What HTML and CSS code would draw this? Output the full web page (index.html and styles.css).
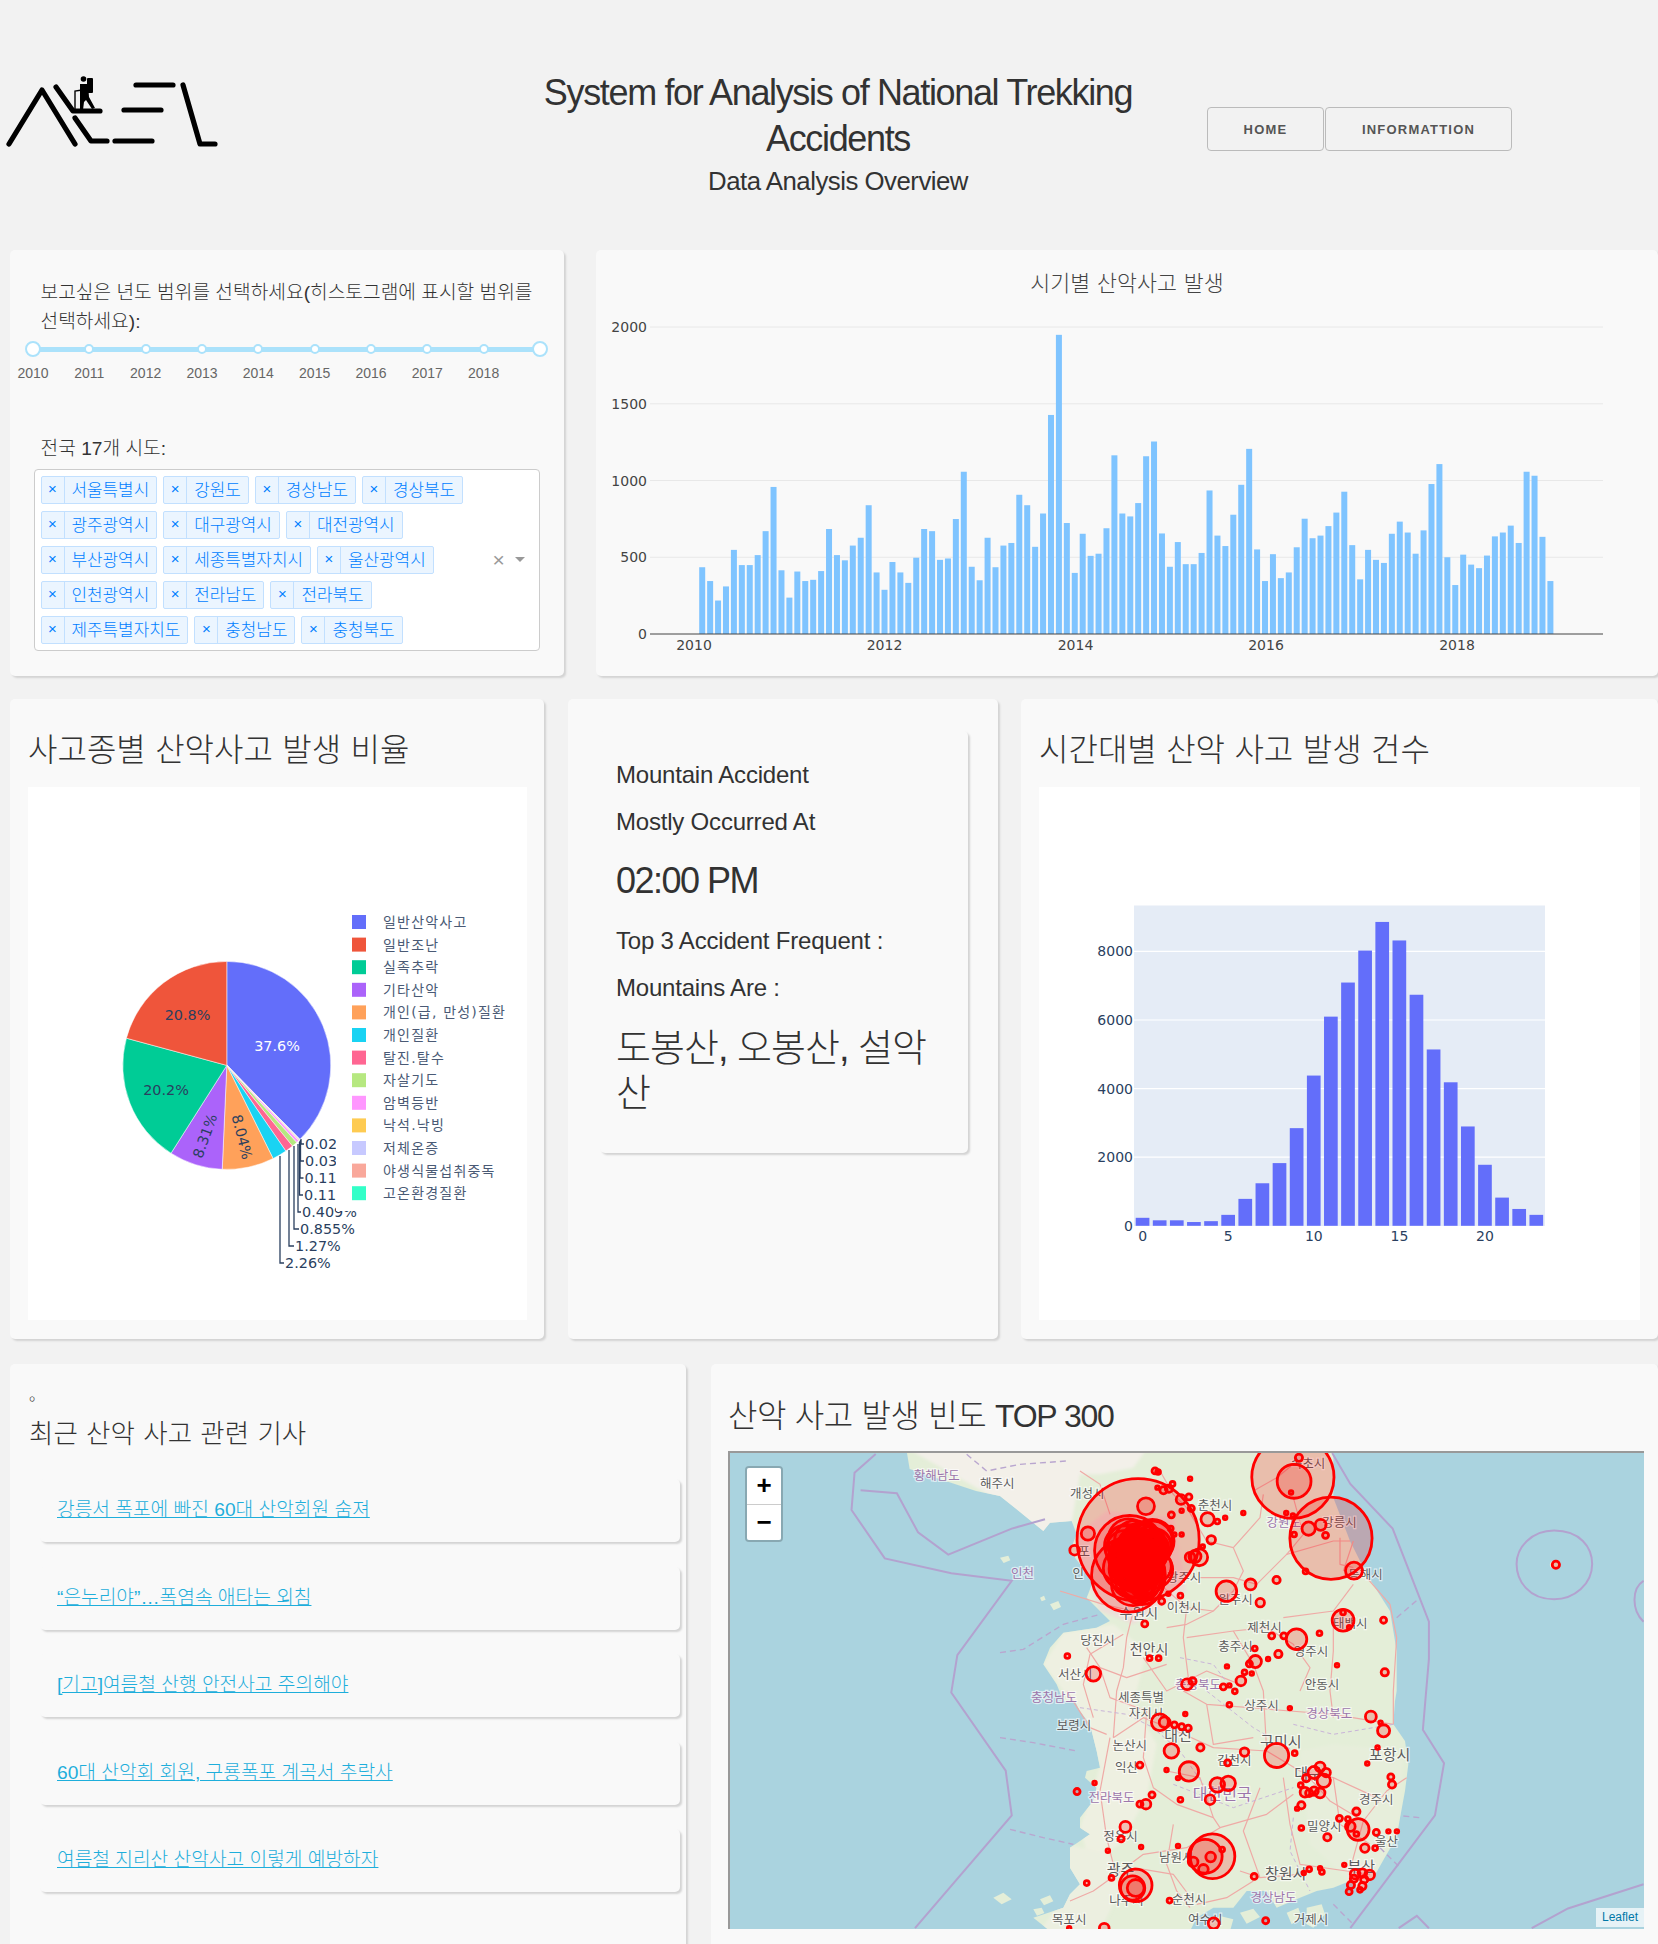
FILE: index.html
```html
<!DOCTYPE html>
<html lang="ko">
<head>
<meta charset="utf-8">
<title>System for Analysis of National Trekking Accidents</title>
<link rel="stylesheet" href="styles.css">
</head>
<body>
<header class="header">
  <svg class="logo" viewBox="0 0 225 110" width="225" height="110" aria-label="logo">
    <g class="logo-strokes">
      <path d="M9 84 L42 30 L75 84"/>
      <path d="M56 27 L73 51 L100 51"/>
      <path d="M75 58 L91 81 L107 81"/>
      <path d="M115 81 L152 81"/>
      <path d="M124 50 L161 50"/>
      <path d="M136 25 L173 25"/>
      <path d="M183 25 L200 84 L215 84"/>
    </g>
    <g class="logo-hiker">
      <circle cx="83.5" cy="19" r="2.8"/>
      <rect x="87" y="18" width="6" height="15" rx="1"/>
      <path d="M80 24 L88 24 L89 37 L95 48 L92 49 L86 40 L84 42 L83 50 L80 50 L80 40 Z"/>
      <path class="logo-pole" d="M75 50 L75 31 L82 30"/>
    </g>
  </svg>
  <div class="title-block">
    <h1 class="title">System for Analysis of National Trekking Accidents</h1>
    <h2 class="subtitle">Data Analysis Overview</h2>
  </div>
  <nav class="nav">
    <a class="nav-btn nav-home">HOME</a>
    <a class="nav-btn nav-info">INFORMATTION</a>
  </nav>
</header>

<main>
  <section class="row row-top">
    <div class="card filter-card">
      <p class="field-label">보고싶은 년도 범위를 선택하세요(히스토그램에 표시할 범위를 선택하세요):</p>
      <div class="slider">
        <div class="stops">
          <span class="stop"><i class="handle"></i></span>
          <span class="stop"><i class="dot"></i></span>
          <span class="stop"><i class="dot"></i></span>
          <span class="stop"><i class="dot"></i></span>
          <span class="stop"><i class="dot"></i></span>
          <span class="stop"><i class="dot"></i></span>
          <span class="stop"><i class="dot"></i></span>
          <span class="stop"><i class="dot"></i></span>
          <span class="stop"><i class="dot"></i></span>
          <span class="stop"><i class="handle"></i></span>
        </div>
      </div>
      <div class="slider-labels">
        <span>2010</span><span>2011</span><span>2012</span><span>2013</span><span>2014</span><span>2015</span><span>2016</span><span>2017</span><span>2018</span>
      </div>
      <p class="field-label region-label">전국 17개 시도:</p>
      <div class="select">
        <div class="select-values">
          <span class="tag"><b>×</b><em>서울특별시</em></span>
          <span class="tag"><b>×</b><em>강원도</em></span>
          <span class="tag"><b>×</b><em>경상남도</em></span>
          <span class="tag"><b>×</b><em>경상북도</em></span>
          <span class="tag"><b>×</b><em>광주광역시</em></span>
          <span class="tag"><b>×</b><em>대구광역시</em></span>
          <span class="tag"><b>×</b><em>대전광역시</em></span>
          <span class="tag"><b>×</b><em>부산광역시</em></span>
          <span class="tag"><b>×</b><em>세종특별자치시</em></span>
          <span class="tag"><b>×</b><em>울산광역시</em></span>
          <span class="tag"><b>×</b><em>인천광역시</em></span>
          <span class="tag"><b>×</b><em>전라남도</em></span>
          <span class="tag"><b>×</b><em>전라북도</em></span>
          <span class="tag"><b>×</b><em>제주특별자치도</em></span>
          <span class="tag"><b>×</b><em>충청남도</em></span>
          <span class="tag"><b>×</b><em>충청북도</em></span>
        </div>
        <span class="select-clear">×</span>
        <span class="select-arrow"></span>
      </div>
    </div>
    <div class="card monthly-card"><svg id="monthly" class="chart" width="1062" height="426"></svg></div>
  </section>

  <section class="row row-mid">
    <div class="card pie-card">
      <h3 class="card-title">사고종별 산악사고 발생 비율</h3>
      <svg id="pie" class="plot" width="499" height="533"></svg>
    </div>
    <div class="card stat-card">
      <div class="stat-inner">
        <p class="stat-line">Mountain Accident</p>
        <p class="stat-line">Mostly Occurred At</p>
        <p class="stat-big">02:00 PM</p>
        <p class="stat-line stat-gap">Top 3 Accident Frequent :</p>
        <p class="stat-line">Mountains Are :</p>
        <p class="stat-big stat-names">도봉산, 오봉산, 설악산</p>
      </div>
    </div>
    <div class="card hist-card">
      <h3 class="card-title">시간대별 산악 사고 발생 건수</h3>
      <svg id="hist" class="plot" width="601" height="533"></svg>
    </div>
  </section>

  <section class="row row-bottom">
    <div class="card news-card">
      <p class="news-dot">。</p>
      <h3 class="card-title news-title">최근 산악 사고 관련 기사</h3>
      <div class="news-list">
        <div class="news-item"><a href="#">강릉서 폭포에 빠진 60대 산악회원 숨져</a></div>
        <div class="news-item"><a href="#">“은누리야”…폭염속 애타는 외침</a></div>
        <div class="news-item"><a href="#">[기고]여름철 산행 안전사고 주의해야</a></div>
        <div class="news-item"><a href="#">60대 산악회 회원, 구룡폭포 계곡서 추락사</a></div>
        <div class="news-item"><a href="#">여름철 지리산 산악사고 이렇게 예방하자</a></div>
      </div>
    </div>
    <div class="card map-card">
      <h3 class="card-title map-title">산악 사고 발생 빈도 <span class="map-title-latin">TOP 300</span></h3>
      <div class="map">
        <svg id="map" class="map-svg" width="914" height="476"></svg>
        <div class="zoom-bar">
          <a class="zoom-btn">+</a>
          <a class="zoom-btn zoom-out">−</a>
        </div>
        <div class="attribution"><a>Leaflet</a></div>
      </div>
    </div>
  </section>
</main>
<script src="charts.js"></script>
</body>
</html>
```
FILE: styles.css
```css
* { box-sizing: border-box; }
html, body { margin: 0; padding: 0; }
html { background: #f2f2f2; }
body {
  width: 1658px;
  height: 1944px;
  overflow: hidden;
  background: #f2f2f2;
  color: #323232;
  font-family: "Liberation Sans", "Noto Sans CJK KR", sans-serif;
  font-weight: 300;
}
p, h1, h2, h3 { margin: 0; font-weight: 300; }

/* header */
.header { display: flex; align-items: flex-start; height: 250px; }
.logo { margin-top: 60px; flex: none; display: block; }
.logo-strokes path { fill: none; stroke: #000; stroke-width: 5.2; stroke-linecap: round; stroke-linejoin: round; }
.logo-hiker { fill: #000; }
.logo-pole { fill: none; stroke: #000; stroke-width: 1.4; }
.title-block { width: 600px; margin: 70px 0 0 313px; text-align: center; flex: none; }
.title { font-size: 36px; line-height: 46px; letter-spacing: -1.35px; }
.subtitle { font-size: 25.8px; line-height: 36px; letter-spacing: -0.5px; margin-top: 1px; }
.nav { display: flex; margin: 107px 0 0 69px; }
.nav-btn {
  height: 44px;
  border: 1px solid #bbb;
  border-radius: 4px;
  color: #555;
  font-size: 13px;
  font-weight: 700;
  letter-spacing: 1.2px;
  line-height: 44px;
  text-align: center;
}
.nav-home { width: 117px; }
.nav-info { width: 187px; margin-left: 1px; }

/* shared */
.row { display: flex; }
.card {
  background: #f9f9f9;
  border-radius: 5px;
  box-shadow: 2px 2px 2px lightgrey;
  flex: none;
}
.card-title { font-size: 32px; line-height: 40px; word-spacing: 0.5px; margin-bottom: 18px; color: #333; position: relative; top: 1px; }
.plot { display: block; background: #fff; }
.chart { display: block; }
svg text { font-family: "DejaVu Sans", "Noto Sans CJK KR", sans-serif; font-weight: 400; }
svg text.chart-title { font-weight: 300; }

/* row 1 */
.row-top { height: 426px; padding-left: 10px; gap: 32px; }
.filter-card { width: 554px; padding: 29px 0 0 30.5px; }
.field-label { font-size: 19.2px; line-height: 28.6px; width: 505px; color: #333; }
.slider { position: relative; width: 523px; margin: 4.8px 0 0 -15.5px; height: 16px; }
.slider::before {
  content: "";
  position: absolute;
  left: 8px; right: 8px; top: 6px;
  height: 5px;
  background: #abe2fb;
}
.stops { position: relative; display: flex; justify-content: space-between; align-items: center; height: 17px; }
.stop { width: 16px; height: 16px; display: flex; align-items: center; justify-content: center; }
.handle { width: 16px; height: 16px; border-radius: 50%; background: #fff; border: 2px solid #abe2fb; }
.dot { width: 10px; height: 10px; border-radius: 50%; background: #fff; border: 2px solid #abe2fb; }
.slider-labels {
  display: grid;
  grid-template-columns: repeat(9, 56.33px);
  margin: 8px 0 0 -35.66px;
  font-size: 14px;
  line-height: 17px;
  font-weight: 400;
  color: #666;
  text-align: center;
}
.region-label { margin-top: 53px; }
.select {
  display: flex;
  align-items: center;
  width: 506px;
  height: 182px;
  margin: 5.4px 0 0 -7px;
  border: 1px solid #ccc;
  border-radius: 4px;
  background: #fff;
}
.select-values { display: flex; flex-wrap: wrap; align-content: flex-start; gap: 7px 6px; width: 450px; height: 180px; padding: 6px 0 0 6px; flex: none; }
.tag {
  display: flex;
  height: 28px;
  border: 1px solid #c2e0ff;
  border-radius: 2px;
  background: #ebf5ff;
  color: #007eff;
  font-size: 16.9px;
  line-height: 27px;
}
.tag b { width: 23px; border-right: 1px solid #c2e0ff; font-weight: 400; font-size: 15px; line-height: 24px; text-align: center; }
.tag em { font-style: normal; padding: 0 7px; }
.select-clear { margin-left: 8px; color: #999; font-size: 21px; line-height: 18px; font-weight: 400; }
.select-arrow {
  margin-left: 10px;
  width: 0; height: 0;
  border: 5.5px solid transparent;
  border-top-color: #999;
  border-bottom-width: 0;
}

/* row 2 */
.row-mid { height: 640px; margin-top: 23px; padding-left: 10px; }
.pie-card { width: 534px; padding: 30px 17px 0 18px; }
.stat-card { width: 430px; margin-left: 24px; padding: 32px 0 0 32px; }
.stat-inner {
  width: 368px;
  height: 422px;
  padding: 26px 16px 0;
  background: #f9f9f9;
  border-radius: 5px;
  box-shadow: 2px 2px 2px lightgrey;
}
.stat-line { font-size: 24px; line-height: 36px; letter-spacing: -0.2px; margin-bottom: 11px; }
.stat-big { font-size: 36px; line-height: 46px; letter-spacing: -1.5px; margin: 18px 0 19px; }
.stat-gap { margin-top: 19px; }
.stat-names { font-size: 38px; line-height: 45px; letter-spacing: -1px; margin-top: 20px; }
.hist-card { width: 637px; margin-left: 23px; padding: 30px 18px 0; }

/* row 3 */
.row-bottom { height: 600px; margin-top: 25px; padding-left: 10px; gap: 25px; }
.news-card { width: 676px; padding: 16px 6px 0 19px; }
.news-dot { font-size: 16px; line-height: 30px; height: 30px; }
.news-title { font-size: 26.5px; margin: 3px 0 26px; word-spacing: 1px; }
.news-list { margin-left: 11px; display: flex; flex-direction: column; gap: 24.5px; }
.news-item {
  height: 63px;
  padding: 0 17px 5px;
  display: flex;
  align-items: center;
  background: #f9f9f9;
  border-radius: 5px;
  box-shadow: 2px 2px 2px lightgrey;
  font-size: 19.2px;
}
.news-item a { color: #1eaedb; text-decoration: underline; }
.map-card { width: 947px; padding: 31px 0 0 17px; }
.map-title { margin-bottom: 16px; letter-spacing: -0.5px; }
.map-title-latin { letter-spacing: -1.3px; }
.map {
  position: relative;
  width: 916px;
  height: 478px;
  border-left: 2px solid #999;
  border-top: 2px solid #999;
  background: #aad3df;
  overflow: hidden;
}
.map-svg { display: block; }
.map-svg text { font-family: "Noto Sans CJK KR", sans-serif; font-weight: 400; }
.zoom-bar {
  position: absolute;
  left: 15px;
  top: 13px;
  width: 38px;
  border: 2px solid rgba(0,0,0,.2);
  border-radius: 4px;
  background-clip: padding-box;
}
.zoom-btn {
  display: block;
  height: 36px;
  background: #fff;
  color: #000;
  font: 700 26px/35px "Liberation Sans", sans-serif;
  text-align: center;
  border-radius: 2px 2px 0 0;
}
.zoom-out { border-top: 1px solid #ccc; border-radius: 0 0 2px 2px; }
.attribution {
  position: absolute;
  right: 0;
  bottom: 2px;
  padding: 0 6px;
  background: rgba(255,255,255,.7);
  font-size: 12px;
  font-weight: 400;
  line-height: 19px;
}
.attribution a { color: #0078a8; }
```
FILE: charts.js
```js
(function () {
  function el(id, html) { document.getElementById(id).innerHTML = html; }
  function txt(x, y, s, o) {
    o = o || {};
    return '<text x="' + x + '" y="' + y + '" font-size="' + (o.size || 14) + '" fill="' + (o.fill || '#2a3f5f') + '" text-anchor="' + (o.anchor || 'start') + '" dominant-baseline="central"' + (o.rot ? ' transform="rotate(' + o.rot + ' ' + x + ' ' + y + ')"' : '') + (o.extra || '') + '>' + s + '</text>';
  }

  /* monthly bars */
  (function () {
    var v = [435,345,218,310,548,449,449,514,670,958,415,237,407,345,353,410,684,514,480,576,627,839,401,288,469,401,333,497,684,670,483,492,749,1057,438,350,627,435,576,593,907,839,568,785,1427,1949,723,398,653,509,523,689,1164,785,766,853,1158,1254,655,438,599,455,455,528,935,641,573,777,972,1206,551,345,520,364,401,565,751,624,641,703,791,927,579,356,548,483,463,653,732,661,523,675,977,1107,500,319,517,452,429,511,636,661,706,593,1057,1031,633,345];
    var ox = 596, oy = 250, y0 = 634 - oy, s = 307 / 2000, h = '';
    [0, 500, 1000, 1500, 2000].forEach(function (t) {
      var y = y0 - t * s;
      if (t) h += '<line x1="' + (650 - ox) + '" x2="' + (1603 - ox) + '" y1="' + y + '" y2="' + y + '" stroke="#e8e8e8"/>';
      h += txt(647 - ox, y, t, { anchor: 'end', fill: '#444', size: 14 });
    });
    v.forEach(function (d, i) {
      h += '<rect x="' + (699.2 - ox + i * 7.927) + '" y="' + (y0 - d * s) + '" width="6" height="' + d * s + '" fill="#7fc4ff"/>';
    });
    h += '<line x1="' + (650 - ox) + '" x2="' + (1603 - ox) + '" y1="' + y0 + '" y2="' + y0 + '" stroke="#444"/>';
    [[2010, 694], [2012, 884.5], [2014, 1075.5], [2016, 1266], [2018, 1457]].forEach(function (t) {
      h += txt(t[1] - ox, 645 - oy, t[0], { anchor: 'middle', fill: '#444', size: 14 });
    });
    h += txt(1127 - ox, 283 - oy, '시기별 산악사고 발생', { anchor: 'middle', fill: '#444', size: 21.7, extra: ' class="chart-title"' });
    el('monthly', h);
  })();

  /* pie */
  (function () {
    var ox = 28, oy = 787, cx = 226.8 - ox, cy = 1065.4 - oy, r = 104, h = '';
    var slices = [[37.6, '#636efa'], [0.02, '#33ffc8'], [0.03, '#f9a89b'], [0.11, '#c7c9ff'], [0.11, '#fecb52'], [0.409, '#ff97ff'], [0.855, '#b6e880'], [1.27, '#ff6692'], [2.26, '#19d3f3'], [8.04, '#ffa15a'], [8.31, '#ab63fa'], [20.2, '#00cc96'], [20.8, '#ef553b']];
    var a = 0;
    slices.forEach(function (s) {
      var b = a + s[0] / 100.01 * Math.PI * 2;
      var x1 = cx + r * Math.sin(a), y1 = cy - r * Math.cos(a), x2 = cx + r * Math.sin(b), y2 = cy - r * Math.cos(b);
      h += '<path d="M' + cx + ' ' + cy + 'L' + x1 + ' ' + y1 + 'A' + r + ' ' + r + ' 0 ' + (b - a > Math.PI ? 1 : 0) + ' 1 ' + x2 + ' ' + y2 + 'Z" fill="' + s[1] + '" stroke="#fff" stroke-width="0.5"/>';
      a = b;
    });
    h += txt(277 - ox, 1046 - oy, '37.6%', { anchor: 'middle', fill: '#fff', size: 14.4 });
    h += txt(187.5 - ox, 1015 - oy, '20.8%', { anchor: 'middle', size: 14.4 });
    h += txt(166 - ox, 1090 - oy, '20.2%', { anchor: 'middle', size: 14.4 });
    h += txt(205 - ox, 1136 - oy, '8.31%', { anchor: 'middle', size: 14.4, rot: -70 });
    h += txt(242 - ox, 1137 - oy, '8.04%', { anchor: 'middle', size: 14.4, rot: 76 });
    var out = [['2.26%', 280, 1156, 1263, 285], ['1.27%', 289, 1150, 1246, 295], ['0.855%', 294, 1146, 1229, 300], ['0.409%', 298, 1144, 1212, 302], ['0.11', 299.5, 1142, 1195, 304], ['0.11', 300, 1141, 1178, 304.5], ['0.03', 300.5, 1140, 1161, 305], ['0.02', 301, 1139, 1144, 305]];
    out.forEach(function (o) {
      h += '<path d="M' + (o[1] - ox) + ' ' + (o[2] - oy) + 'V' + (o[3] - oy) + 'H' + (o[4] - 1 - ox) + '" fill="none" stroke="#2a3f5f" stroke-width="1.3"/>';
      h += txt(o[4] - ox, o[3] - oy, o[0], { size: 14.4 });
    });
    h += '<rect x="' + (336 - ox) + '" y="' + (905 - oy) + '" width="190" height="' + (1211 - 905) + '" fill="#fff"/>';
    var leg = [['일반산악사고', '#636efa'], ['일반조난', '#ef553b'], ['실족추락', '#00cc96'], ['기타산악', '#ab63fa'], ['개인(급, 만성)질환', '#ffa15a'], ['개인질환', '#19d3f3'], ['탈진.탈수', '#ff6692'], ['자살기도', '#b6e880'], ['암벽등반', '#ff97ff'], ['낙석.낙빙', '#fecb52'], ['저체온증', '#c7c9ff'], ['야생식물섭취중독', '#f9a89b'], ['고온환경질환', '#33ffc8']];
    leg.forEach(function (l, i) {
      var y = 922 + i * 22.6 - oy;
      h += '<rect x="' + (352 - ox) + '" y="' + (y - 7) + '" width="14" height="14" fill="' + l[1] + '"/>';
      h += txt(383 - ox, y, l[0], { size: 14, fill: '#4a5a75', extra: ' letter-spacing="1.2"' });
    });
    el('pie', h);
  })();

  /* hour histogram */
  (function () {
    var v = [233,160,160,110,135,319,785,1240,1828,2847,4380,6098,7092,8024,8859,8319,6736,5141,4184,2896,1779,822,491,319];
    var ox = 1039, oy = 787, y0 = 1225.8 - oy, s = 68.6 / 2000, x0 = 1134 - ox, pitch = 17.12, h = '';
    h += '<rect x="' + x0 + '" y="' + (905.5 - oy) + '" width="411" height="' + (1226 - 905.5) + '" fill="#e5ecf6"/>';
    [2000, 4000, 6000, 8000].forEach(function (t) {
      var y = y0 - t * s;
      h += '<line x1="' + x0 + '" x2="' + (x0 + 411) + '" y1="' + y + '" y2="' + y + '" stroke="#fff" stroke-width="1.2"/>';
    });
    [0, 2000, 4000, 6000, 8000].forEach(function (t) {
      var y = y0 - t * s;
      h += txt(1133 - ox, y, t, { anchor: 'end', size: 14 });
    });
    v.forEach(function (d, i) {
      h += '<rect x="' + (x0 + i * pitch + 1.7) + '" y="' + (y0 - d * s) + '" width="13.7" height="' + d * s + '" fill="#636efa"/>';
    });
    [0, 5, 10, 15, 20].forEach(function (t) {
      h += txt(x0 + t * pitch + 8.6, 1236 - oy, t, { anchor: 'middle', size: 14 });
    });
    el('hist', h);
  })();

  /* map: land and roads are traced on a 3x sheet, borders on a stretched one */
  (function () {
    var sx = 0.6046, sy = 0.3724, dx = 34, dy = 247;
    function px(z) { return (z - dx) * sx; }
    function py(z) { return (z - dy) * sy; }
    var h = '<defs><filter id="soft" x="-5%" y="-5%" width="110%" height="110%"><feGaussianBlur stdDeviation="1"/></filter><filter id="softer" x="-10%" y="-10%" width="120%" height="120%"><feGaussianBlur stdDeviation="4"/></filter></defs>';

    h += '<g transform="translate(270 -2) scale(.33333)">';
    var coast = 'M-280 0L-271 54L-172 87L-72 120L0 135L50 175L130 240L150 215L215 210L230 250L210 300L240 340L280 390L260 440L300 480L330 510L290 530L190 545L150 590L130 640L170 700L190 750L225 750L240 780L270 820L290 900L300 950L260 960L255 980L290 1010L280 1050L240 1100L240 1130L270 1150L210 1190L210 1250L240 1300L210 1330L190 1370L100 1400L150 1440L570 1440L590 1400L640 1370L700 1370L740 1320L800 1320L830 1370L900 1340L950 1320L1000 1310L1050 1290L1080 1320L1120 1280L1160 1210L1190 1160L1200 1100L1215 1020L1225 940L1215 870L1180 820L1185 750L1190 720L1190 600L1170 480L1100 370L1050 270L1000 140L1000 0Z';
    h += '<g filter="url(#soft)"><path d="' + coast + '" fill="#e4eed8"/>';
    h += '<clipPath id="landclip"><path d="' + coast + '"/></clipPath></g>';
    h += '<g clip-path="url(#landclip)"><g filter="url(#softer)">';
    h += '<path d="M-300 -20L450 -20L400 50L300 70L240 70L215 215L120 260L0 150Z" fill="#f3f0e9"/>';
    h += '<path d="M230 250L320 180L520 200L560 420L400 520L300 480L240 340Z" fill="#ecdfd9"/>';
    h += '<path d="M130 640L190 545L340 520L440 600L400 760L470 880L440 1040L360 1180L270 1240L240 1130L300 950L250 800Z" fill="#eef0e1"/>';
    h += '<path d="M200 1180L330 1210L360 1320L300 1440L120 1440L190 1340Z" fill="#ecefe0"/>';
    h += '<path d="M900 900L1000 880L1210 900L1200 1100L1130 1260L1040 1280L930 1180Z" fill="#e7eedb"/>';
    h += '<path d="M1040 1240L1130 1230L1110 1310L1040 1320Z" fill="#ece8de"/>';
    h += '</g></g>';
    ['M-20 1340l30 -15l25 20l-30 15Z', 'M120 1345l30 -12l10 18l-28 12Z', 'M100 1375l25 -5l8 16l-22 8Z', 'M620 1420l40 -25l40 10l-10 35l-60 0Z', 'M720 1385l40 -12l20 25l-40 20Z', 'M860 1385l35 -15l10 30l-30 20Z', 'M920 1370l45 -10l10 30l-35 40l-20 -10Z', 'M150 460l25 -10l8 18l-22 10Z', 'M120 440l12 -6l5 12l-12 5Z', 'M0 320l25 -6l6 14l-20 8Z'].forEach(function (d) {
      h += '<path d="' + d + '" fill="#e4eed8"/>';
    });
    var roads = ['M600 380L700 380L770 400L860 310L1000 270L1050 270', 'M620 270L700 290L730 360L700 420L640 480L560 520L500 530', 'M760 120L830 80L880 40', 'M790 130L780 200L700 290', 'M1020 260L1020 340L1060 350', 'M1100 380L1170 460L1190 560L1180 720L1180 820', 'M400 480L380 560L370 650L350 720L340 860', 'M560 470L550 560L570 720L550 720', 'M560 560L700 540L800 530L880 580L930 650L900 720', 'M700 540L760 640L790 720L800 900', 'M370 550L270 610L250 700L280 800', 'M300 650L380 680L500 640', 'M850 500L1000 480L1060 400', 'M1000 500L1000 600L990 720L1000 800', 'M550 720L620 760L750 770L870 780L1000 790L1180 820', 'M340 860L430 800L530 840L640 890L800 900L900 960L1000 980L1130 1040', 'M440 780L430 920L460 1010L530 1060L640 1100L660 1130L800 1090L880 1030', 'M660 1130L560 1190L430 1210L350 1270L280 1320L210 1350', 'M520 1120L500 1240L530 1320L570 1370', 'M330 860L300 1020L320 1160L350 1280', 'M850 980L870 1120L900 1240L1040 1260L1110 1270', 'M720 1260L780 1280L900 1270', 'M400 1250L520 1270L580 1350', 'M910 960L990 1050L1090 1110L1160 1020L1220 980', 'M1090 1110L1060 1220L1050 1260', 'M590 1360L680 1340L760 1290', 'M200 720L270 830L320 850', 'M240 60L300 100L330 190', 'M480 60L520 130L560 170L620 270', 'M880 140L910 250L860 310', 'M1060 270L1030 360', 'M180 420L310 460L400 480', 'M260 590L300 650L330 740L440 780', 'M480 400L560 470L640 480', 'M430 620L500 720L620 660L720 700', 'M620 760L640 880L760 860', 'M1000 980L1020 1120L1110 1180', 'M640 1100L600 980L500 960', 'M780 1010L730 1140L780 1280'];
    roads.forEach(function (d) {
      h += '<path d="' + d + '" fill="none" stroke="#efaaa6" stroke-width="1.2" stroke-linejoin="round" vector-effect="non-scaling-stroke"/>';
    });
    var dashes = ['M0 605L70 595L190 520L300 490', 'M0 860L100 875L230 900', 'M30 1135L130 1160L220 1180', 'M1140 1190L1200 1250', 'M1190 500L1260 440', 'M1210 1095L1260 1100', 'M1000 1360L1060 1420', 'M-100 10L-40 60L60 40L200 30'];
    dashes.forEach(function (d) {
      h += '<path d="' + d + '" fill="none" stroke="#b9a6cf" stroke-width="1.4" stroke-dasharray="6 4" vector-effect="non-scaling-stroke"/>';
    });
    ['M620 720L760 830L880 900', 'M520 1000L700 1070L880 1010', 'M880 1100L870 1200L930 1320', 'M470 840L540 900L610 1000', 'M240 770L380 790L500 850', 'M880 820L1000 850L1180 820', 'M540 620L640 640L700 720'].forEach(function (d) {
      h += '<path d="' + d + '" fill="none" stroke="#c9b4d8" stroke-width="1" stroke-dasharray="4 3" vector-effect="non-scaling-stroke"/>';
    });
    h += '</g>';

    h += '<g transform="translate(' + (-dx * sx) + ' ' + (-dy * sy) + ') scale(' + sx + ' ' + sy + ')">';
    var borders = ['M250 347L310 355L345 460L395 520L500 450L555 425', 'M275 250L240 300L235 400L290 530L400 570L500 590L410 790L400 890L490 1100L500 1220L340 1523', 'M1030 247L1060 330L1130 450L1190 700L1190 800L1180 990L1215 1080L1200 1220L1060 1523', 'M1360 1523L1420 1470L1545 1405', 'M1140 1523L1170 1490L1190 1523', 'M1397 455C1440 455 1460 500 1460 545C1460 600 1430 640 1397 640C1355 640 1335 590 1335 545C1335 500 1360 455 1397 455Z', 'M1545 590C1525 610 1525 670 1545 700'];
    borders.forEach(function (d) {
      h += '<path d="' + d + '" fill="none" stroke="#b3a2cf" stroke-width="2" vector-effect="non-scaling-stroke"/>';
    });
    h += '<ellipse cx="1397" cy="547" rx="7" ry="10" fill="#e4eed8"/>';
    h += '</g>';

    var labels = [['황해남도', 376, 305, 1], ['해주시', 476, 327], ['개성시', 625, 352], ['춘천시', 836, 386], ['강원도', 950, 432, 1], ['속초시', 990, 272], ['강릉시', 1042, 432], ['인천', 518, 568, 1], ['인', 610, 568], ['포', 620, 510], ['동해시', 1085, 570], ['원주시', 870, 637], ['이천시', 785, 660], ['수원시', 710, 673, 0, 14], ['광주시', 785, 578], ['태백시', 1060, 702], ['제천시', 918, 714], ['당진시', 642, 747], ['천안시', 727, 770, 0, 14], ['충주시', 870, 765], ['영주시', 995, 778], ['서산시', 605, 840], ['안동시', 1013, 866], ['충청북도', 808, 866, 1], ['충청남도', 570, 902, 1], ['세종특별', 714, 902], ['자치시', 722, 943], ['상주시', 913, 922], ['경상북도', 1025, 945, 1], ['보령시', 603, 977], ['대전', 775, 1003, 0, 15], ['논산시', 695, 1030], ['구미시', 945, 1020, 0, 15], ['포항시', 1125, 1055, 0, 15], ['김천시', 868, 1070], ['익산', 690, 1088], ['대구', 990, 1105, 0, 15], ['대한민국', 848, 1160, 1, 16], ['전라북도', 665, 1170, 1], ['경주시', 1103, 1175], ['밀양시', 1017, 1247], ['정읍시', 680, 1275], ['울산', 1120, 1287], ['남원시', 772, 1330], ['광주', 680, 1362, 0, 15], ['부산', 1078, 1355, 0, 15], ['창원시', 953, 1373, 0, 15], ['경상남도', 933, 1437, 1], ['나주시', 690, 1447], ['순천시', 793, 1443], ['목포시', 595, 1498], ['여수시', 820, 1498], ['거제시', 995, 1498]];
    labels.forEach(function (l) {
      h += '<text x="' + px(l[1]) + '" y="' + py(l[2]) + '" font-size="' + (l[4] || 12.5) + '" text-anchor="middle" dominant-baseline="central" fill="' + (l[3] ? '#9c76ab' : '#5c5c5c') + '" stroke="#fff" stroke-opacity=".6" stroke-width="2.4" paint-order="stroke">' + l[0] + '</text>';
    });

    var c = [[709,480,101],[695,509,58],[693,575,61],[965,312,68],[967,323,28],[1028,476,68],[1066,563,14],[722,390,14],[626,463,11],[604,508,8],[824,425,11],[830,480,7],[810,527,14],[803,525,10],[795,527,8],[780,372,8],[855,618,17],[895,600,9],[938,588,6],[911,649,7],[1048,696,18],[1115,696,5],[971,747,17],[950,738,5],[930,738,5],[1009,731,4],[902,772,4],[903,807,10],[893,813,5],[941,787,6],[924,800,3],[1038,817,3],[1117,836,6],[885,836,4],[897,839,3],[879,859,8],[856,820,3],[635,840,12],[592,792,4],[728,798,4],[743,798,4],[720,706,5],[748,645,5],[759,625,3],[779,630,4],[790,868,9],[799,860,6],[850,875,5],[860,871,3],[869,887,4],[860,923,4],[960,932,3],[787,948,3],[745,970,14],[753,970,9],[769,977,5],[781,982,5],[792,986,5],[1094,955,9],[1115,993,10],[1110,971,3],[1105,1038,3],[1088,1081,3],[1127,1117,5],[1129,1137,6],[968,1053,4],[938,1059,20],[885,1050,7],[857,1079,5],[812,1038,6],[764,1047,12],[793,1102,16],[756,1098,3],[712,1085,5],[775,1120,3],[858,1134,12],[840,1138,12],[828,1178,8],[779,1178,4],[732,1165,5],[722,1190,8],[712,1190,5],[637,1133,3],[608,1156,5],[688,1251,9],[681,1283,5],[714,1305,3],[659,1315,3],[665,1388,4],[624,1402,4],[705,1408,27],[700,1415,20],[705,1415,14],[832,1330,37],[820,1330,28],[829,1332,8],[817,1365,8],[800,1345,8],[848,1312,4],[775,1302,3],[901,1384,5],[761,1449,4],[920,1503,5],[834,1510,9],[653,1523,8],[595,1523,3],[1010,1090,8],[1000,1105,10],[1020,1105,7],[1016,1127,11],[987,1120,6],[978,1139,4],[985,1158,8],[1000,1155,7],[1010,1160,8],[992,1160,6],[979,1193,6],[972,1202,3],[979,1254,4],[1022,1279,6],[1073,1258,18],[1060,1250,8],[1070,1210,6],[1042,1228,5],[1056,1230,4],[1103,1266,5],[1123,1263,3],[1137,1263,3],[1084,1308,7],[1101,1308,4],[1070,1270,4],[1050,1353,3],[1068,1378,8],[1080,1375,7],[1092,1380,8],[1066,1390,6],[1083,1392,6],[1061,1407,6],[1080,1410,6],[1058,1425,5],[1076,1420,4],[1013,1372,4],[1010,1362,3],[992,1365,4],[983,1375,3],[1400,547,6],[737,295,5],[742,298,4],[795,316,3],[766,330,4],[760,343,6],[751,347,6],[741,340,3],[793,365,5],[797,396,5],[781,402,3],[764,413,5],[763,450,4],[769,466,3],[781,466,3],[840,431,4],[853,421,3],[883,408,3],[816,498,3],[975,260,6],[962,353,3],[954,408,3],[965,415,3],[991,450,11],[1011,440,9],[1019,468,5],[967,466,4],[986,565,4],[1048,675,4],[1058,715,3]];
    var seed = 7;
    function rnd() { seed = (seed * 16807) % 2147483647; return seed / 2147483647; }
    for (var i = 0; i < 90; i++) {
      var ang = rnd() * 6.283, d = Math.sqrt(rnd());
      c.push([712 + Math.cos(ang) * d * 30, 530 + Math.sin(ang) * d * 75, 6 + rnd() * 30]);
    }
    c.forEach(function (p) {
      h += '<circle cx="' + px(p[0]) + '" cy="' + py(p[1]) + '" r="' + (p[2] / 1.654) + '" fill="#f00" fill-opacity=".2" stroke="#f00" stroke-width="2.8"/>';
    });
    el('map', h);
  })();
})();
```
